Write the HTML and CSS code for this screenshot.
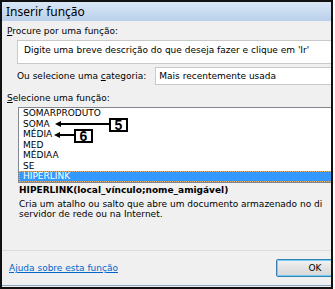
FILE: index.html
```html
<!DOCTYPE html>
<html lang="pt-BR">
<head>
    <meta charset="UTF-8">
    <title>Inserir função</title>
    <link rel="stylesheet" href="styles.css">
</head>
<body>
    <div class="screen">
        <div class="dialog">
            <div class="titlebar">Inserir função</div>
            <div class="content">
                <div class="label first"><u>P</u>rocure por uma função:</div>
                <div class="search">Digite uma breve descrição do que deseja fazer e clique em 'Ir'</div>
                <div class="category-row">
                    <span class="label">Ou selecione uma <u>c</u>ategoria:</span>
                    <div class="select">Mais recentemente usada</div>
                </div>
                <div class="label pick"><u>S</u>elecione uma função:</div>
                <ul class="fn-list">
                    <li>SOMARPRODUTO</li>
                    <li>SOMA</li>
                    <li>MÉDIA</li>
                    <li>MED</li>
                    <li>MÉDIAA</li>
                    <li>SE</li>
                    <li class="selected">HIPERLINK</li>
                </ul>
                <div class="syntax">HIPERLINK(local_vínculo;nome_amigável)</div>
                <p class="desc">
                    <span class="line">Cria um atalho ou salto que abre um documento armazenado no di</span>
                    <span class="line">servidor de rede ou na Internet.</span>
                </p>
            </div>
            <div class="footer">
                <a href="#" class="help">Ajuda sobre esta função</a>
                <button type="button" class="ok">OK</button>
            </div>
        </div>

        <!-- marcações 5 e 6 -->
        <svg class="arrows" width="120" height="40" viewBox="0 0 120 40">
            <line x1="58" y1="9" x2="107" y2="9" stroke="#000" stroke-width="2"/>
            <polygon points="53,9 59,6 59,12" fill="#000"/>
            <line x1="57" y1="20" x2="73" y2="20" stroke="#000" stroke-width="2"/>
            <polygon points="52,20 58,17 58,23" fill="#000"/>
        </svg>
        <div class="callout c5">5</div>
        <div class="callout c6">6</div>
    </div>
</body>
</html>
```

FILE: styles.css
```css
 body {
     margin: 0;
     background-color: #ffffff;
     font-family: "DejaVu Sans", Verdana, sans-serif;
     font-size: 9px;
     color: #000;
 }
 .screen {
     position: relative;
     width: 333px;
     height: 289px;
     border: 2px solid #111;
     box-sizing: border-box;
     overflow: hidden;
     background-color: #f0f0f0;
 }
 .dialog {
     width: 420px;
     height: 284px;
     border-bottom: 1px solid #8aa4c2;
     box-sizing: border-box;
 }
 .titlebar {
     height: 19px;
     line-height: 19px;
     padding-left: 4px;
     font-family: "Noto Sans", "Open Sans", sans-serif;
     font-size: 12px;
     background: linear-gradient(#dae7f6, #b9d0ea);
 }
 .content {
     padding-left: 5px;
 }
 .label {
     line-height: 12px;
 }
 .label.first {
     padding-top: 4px;
 }
 .search {
     margin: 3px 0 0 10px;
     height: 24px;
     line-height: 14px;
     padding: 2px 6px;
     border: 1px solid #c9c9c9;
     background-color: #fff;
     box-sizing: border-box;
 }
 .category-row {
     display: flex;
     align-items: center;
     margin: 3px 0 0 10px;
 }
 .select {
     margin-left: 9px;
     flex: 1;
     height: 18px;
     line-height: 16px;
     padding-left: 3px;
     border: 1px solid #c9c9c9;
     background-color: #fff;
     box-sizing: border-box;
 }
 .label.pick {
     margin-top: 7px;
 }
 .fn-list {
     list-style: none;
     margin: 3px 0 0 11px;
     padding: 0;
     height: 76px;
     border: 1px solid #828790;
     background-color: #fff;
     box-sizing: border-box;
 }
 .fn-list li {
     height: 10.5px;
     line-height: 10.5px;
     padding-left: 4px;
 }
 .fn-list li.selected {
     background-color: #3399ff;
     color: #fff;
     outline: 1px dotted #e0b070;
     outline-offset: -1px;
 }
 .syntax {
     margin: 1px 0 0 12px;
     line-height: 12px;
     font-weight: bold;
 }
 .desc {
     margin: 4px 0 0 12px;
     line-height: 9.5px;
 }
 .desc .line {
     display: block;
     white-space: nowrap;
 }
 .footer {
     display: flex;
     align-items: center;
     justify-content: space-between;
     margin-top: 31px;
     padding: 8px 0 4px 7px;
     border-top: 1px solid #dcdcdc;
 }
 .help {
     color: #0066cc;
     text-decoration: underline;
 }
 .ok {
     width: 78px;
     height: 18px;
     margin-right: 68px;
     font-family: "DejaVu Sans", sans-serif;
     font-size: 9px;
     border: 1px solid #3c7fb1;
     border-radius: 2px;
     box-shadow: inset 0 0 0 1px #6ed0f6;
     background: linear-gradient(#f2f2f2, #e3e3e3 50%, #d7d7d7);
 }
 .arrows {
     position: absolute;
     left: 0;
     top: 113px;
 }
 .callout {
     position: absolute;
     width: 19px;
     height: 14px;
     border: 2px solid #000;
     box-sizing: border-box;
     background-color: #fff;
     font-family: "Liberation Sans", Arial, sans-serif;
     font-weight: bold;
     font-size: 14px;
     line-height: 11px;
     text-align: center;
 }
 .c5 {
     left: 107px;
     top: 116px;
 }
 .c6 {
     left: 72px;
     top: 127px;
 }
```
